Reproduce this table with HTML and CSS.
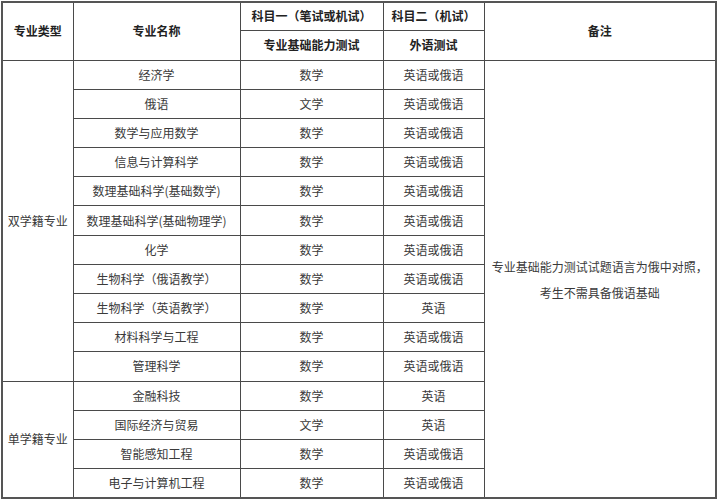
FILE: index.html
```html
<!DOCTYPE html>
<html lang="zh-CN">
<head>
<meta charset="utf-8">
<title>专业列表</title>
<link rel="stylesheet" href="styles.css">
</head>
<body>
<table class="majors">
  <colgroup>
    <col class="c-type">
    <col class="c-name">
    <col class="c-sub1">
    <col class="c-sub2">
    <col class="c-note">
  </colgroup>
  <thead>
    <tr class="h1">
      <th rowspan="2">专业类型</th>
      <th rowspan="2">专业名称</th>
      <th>科目一（笔试或机试）</th>
      <th>科目二（机试）</th>
      <th rowspan="2">备注</th>
    </tr>
    <tr class="h2">
      <th>专业基础能力测试</th>
      <th>外语测试</th>
    </tr>
  </thead>
  <tbody>
    <tr><td rowspan="11">双学籍专业</td><td>经济学</td><td>数学</td><td>英语或俄语</td>
      <td rowspan="15" class="note">专业基础能力测试试题语言为俄中对照，<br>考生不需具备俄语基础</td></tr>
    <tr><td>俄语</td><td>文学</td><td>英语或俄语</td></tr>
    <tr><td>数学与应用数学</td><td>数学</td><td>英语或俄语</td></tr>
    <tr><td>信息与计算科学</td><td>数学</td><td>英语或俄语</td></tr>
    <tr><td>数理基础科学(基础数学)</td><td>数学</td><td>英语或俄语</td></tr>
    <tr><td>数理基础科学(基础物理学)</td><td>数学</td><td>英语或俄语</td></tr>
    <tr><td>化学</td><td>数学</td><td>英语或俄语</td></tr>
    <tr><td>生物科学（俄语教学）</td><td>数学</td><td>英语或俄语</td></tr>
    <tr><td>生物科学（英语教学）</td><td>数学</td><td>英语</td></tr>
    <tr><td>材料科学与工程</td><td>数学</td><td>英语或俄语</td></tr>
    <tr><td>管理科学</td><td>数学</td><td>英语或俄语</td></tr>
    <tr><td rowspan="4">单学籍专业</td><td>金融科技</td><td>数学</td><td>英语</td></tr>
    <tr><td>国际经济与贸易</td><td>文学</td><td>英语</td></tr>
    <tr><td>智能感知工程</td><td>数学</td><td>英语或俄语</td></tr>
    <tr><td>电子与计算机工程</td><td>数学</td><td>英语或俄语</td></tr>
  </tbody>
</table>
</body>
</html>
```
FILE: styles.css
```css
html, body {
  margin: 0;
  padding: 0;
  background: #ffffff;
}
body {
  padding: 1px 0 0 1px;
  font-family: "Noto Sans CJK SC", "Microsoft YaHei", sans-serif;
  font-size: 12px;
  color: #3a3a3a;
}
.majors {
  border-collapse: collapse;
  table-layout: fixed;
  width: 716px;
  border: 2px solid #555;
}
.c-type { width: 71px; }
.c-name { width: 167px; }
.c-sub1 { width: 143px; }
.c-sub2 { width: 101px; }
.c-note { width: 232px; }
.majors th, .majors td {
  border: 1px solid #4a4a4a;
  padding: 0;
  text-align: center;
  vertical-align: middle;
  line-height: 16px;
  white-space: nowrap;
}
.majors th {
  font-weight: bold;
  color: #222;
}
.majors .h1 { height: 28px; }
.majors .h2 { height: 30px; }
.majors tbody tr { height: 29.2px; }
.majors td.note {
  line-height: 26px;
  white-space: normal;
  padding-top: 2px;
}
```
